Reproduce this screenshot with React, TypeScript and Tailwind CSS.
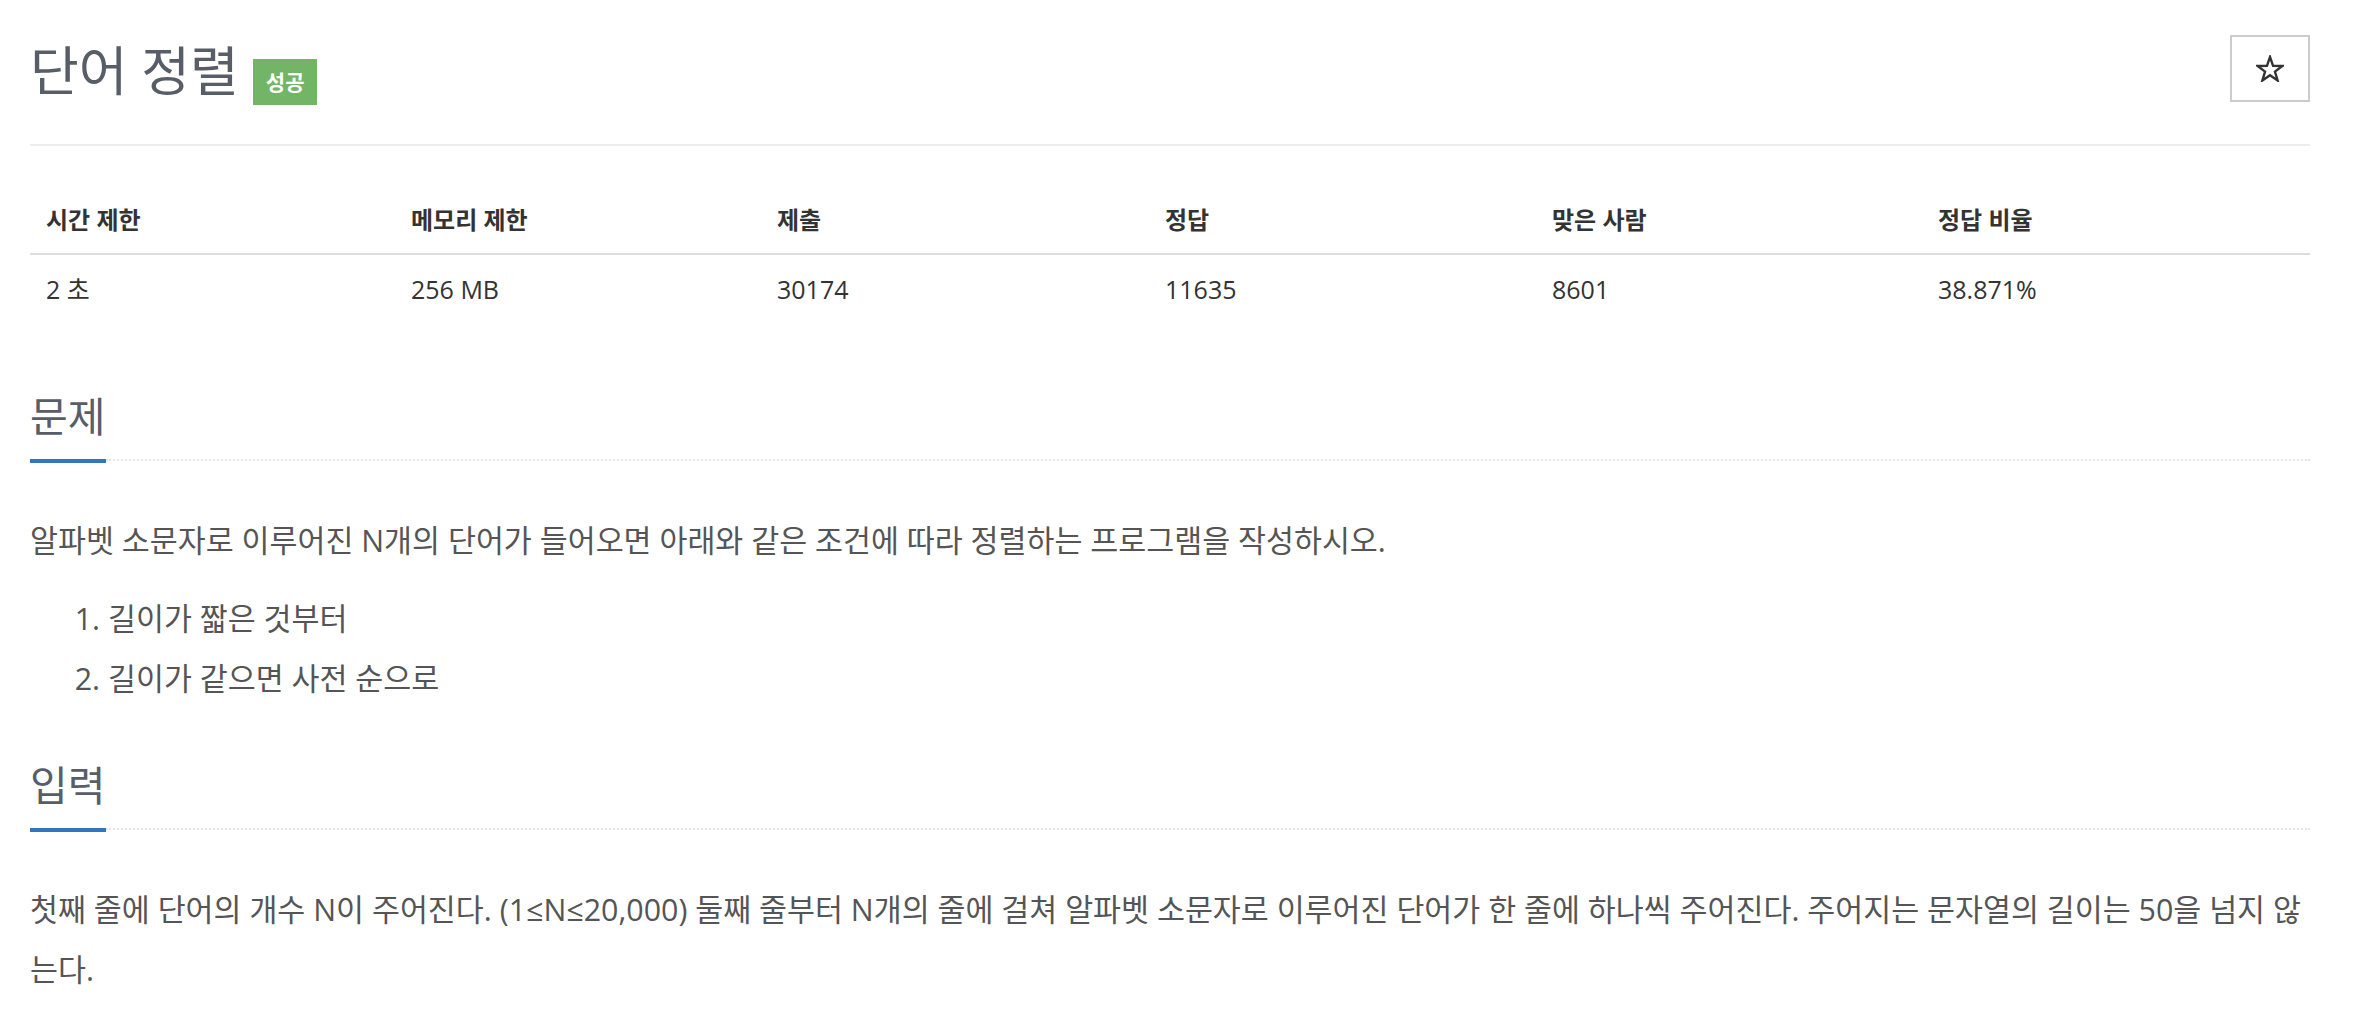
import React from "react";

const cols = "grid grid-cols-[365px_366px_388px_387px_386px_1fr]";

function Star() {
  return (
    <svg width="28" height="27" viewBox="0 0 28 27" fill="none">
      <polygon
        points="14,2 17.06,10.79 26.36,10.98 18.95,16.61 21.64,25.52 14,20.2 6.36,25.52 9.05,16.61 1.64,10.98 10.94,10.79"
        stroke="#333333"
        strokeWidth="2.4"
        strokeLinejoin="miter"
        fill="white"
      />
    </svg>
  );
}

function Headline({ title }: { title: string }) {
  return (
    <div>
      <h2 className="text-[41px] leading-[50px] font-normal text-[#585e68]">{title}</h2>
      <div className="mt-[18px] flex items-start">
        <div className="h-[4px] w-[76px] bg-[#3276bb]" />
        <div className="h-0 flex-1 border-t-2 border-dotted border-[#e1e5eb]" />
      </div>
    </div>
  );
}

export default function App() {
  const heads = ["시간 제한", "메모리 제한", "제출", "정답", "맞은 사람", "정답 비율"];
  const vals = ["2 초", "256 MB", "30174", "11635", "8601", "38.871%"];
  return (
    <div className="min-h-[1028px] w-full bg-white pl-[30px] pr-[46px] pt-[35px] font-['Open_Sans','Noto_Sans_CJK_KR',sans-serif] text-[#555555]">
      <div className="flex h-[70px] items-start justify-between">
        <div className="flex items-start">
          <h1 className="mt-[2px] text-[53px] leading-[67px] font-normal text-[#585e68]">단어 정렬</h1>
          <span className="ml-[14px] mt-[24px] flex h-[46px] items-center bg-[#73b566] px-[13px] text-[21px] font-semibold leading-none text-white">
            성공
          </span>
        </div>
        <button className="flex h-[67px] w-[80px] items-center justify-center border-2 border-[#cccccc] bg-white">
          <Star />
        </button>
      </div>
      <div className="mt-[39px] h-[2px] bg-[#eeeeee]" />

      <div className="mt-[41px] text-[25px] leading-[36px] text-[#333333]">
        <div className={`${cols} border-b-2 border-[#dddddd]`}>
          {heads.map((h) => (
            <div key={h} className="px-[16px] py-[15px] text-[24px] font-bold">
              {h}
            </div>
          ))}
        </div>
        <div className={cols}>
          {vals.map((v) => (
            <div key={v} className="px-[16px] py-[16px]">
              {v}
            </div>
          ))}
        </div>
      </div>

      <div className="mt-[68px]">
        <Headline title="문제" />
        <div className="mt-[48px] text-[30.4px] leading-[60px]">
          <p>알파벳 소문자로 이루어진 N개의 단어가 들어오면 아래와 같은 조건에 따라 정렬하는 프로그램을 작성하시오.</p>
          <ol className="mt-[18px] list-decimal pl-[78px]">
            <li>길이가 짧은 것부터</li>
            <li>길이가 같으면 사전 순으로</li>
          </ol>
        </div>
      </div>

      <div className="mt-[51px]">
        <Headline title="입력" />
        <div className="mt-[48px] text-[30.4px] leading-[60px]">
          <p>
            첫째 줄에 단어의 개수 N이 주어진다. (1≤N≤20,000) 둘째 줄부터 N개의 줄에 걸쳐 알파벳 소문자로 이루어진 단어가 한 줄에
            하나씩 주어진다. 주어지는 문자열의 길이는 50을 넘지 않<br />는다.
          </p>
        </div>
      </div>
    </div>
  );
}
